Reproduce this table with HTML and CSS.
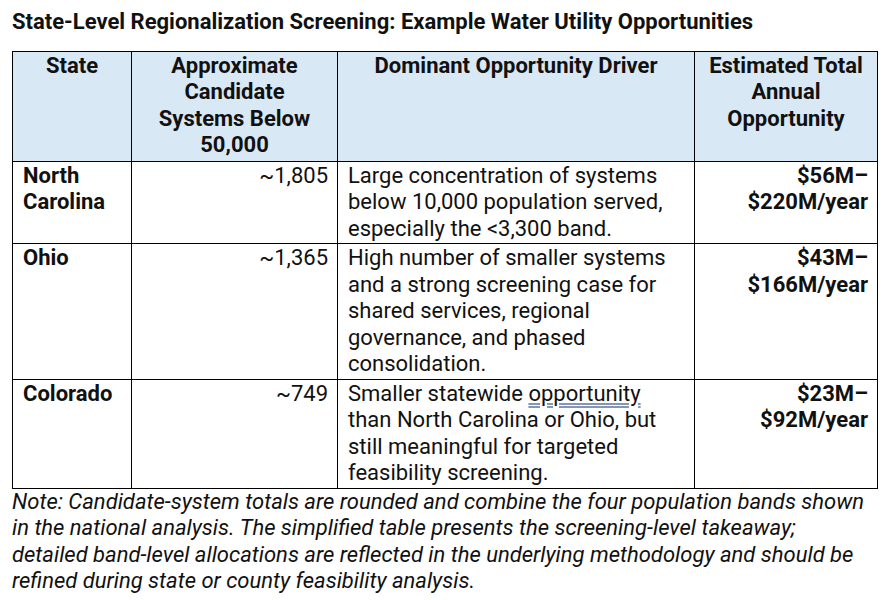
FILE: index.html
```html
<!DOCTYPE html>
<html lang="en">
<head>
<meta charset="utf-8">
<title>State-Level Regionalization Screening</title>
<link rel="stylesheet" href="styles.css">
</head>
<body>
<h1 class="title">State-Level Regionalization Screening: Example Water Utility Opportunities</h1>
<table class="grid">
  <colgroup>
    <col class="c-state">
    <col class="c-count">
    <col class="c-driver">
    <col class="c-total">
  </colgroup>
  <thead>
    <tr>
      <th>State</th>
      <th>Approximate<br>Candidate<br>Systems Below<br>50,000</th>
      <th>Dominant Opportunity Driver</th>
      <th>Estimated Total<br>Annual<br>Opportunity</th>
    </tr>
  </thead>
  <tbody>
    <tr>
      <td class="state">North Carolina</td>
      <td class="num">~1,805</td>
      <td>Large concentration of systems below 10,000 population served, especially the &lt;3,300 band.</td>
      <td class="total">$56M–<br>$220M/year</td>
    </tr>
    <tr>
      <td class="state">Ohio</td>
      <td class="num">~1,365</td>
      <td>High number of smaller systems and a strong screening case for shared services, regional governance, and phased consolidation.</td>
      <td class="total">$43M–<br>$166M/year</td>
    </tr>
    <tr>
      <td class="state">Colorado</td>
      <td class="num">~749</td>
      <td>Smaller statewide <span class="flag">opportunity</span> than North Carolina or Ohio, but still meaningful for targeted feasibility screening.</td>
      <td class="total">$23M–<br>$92M/year</td>
    </tr>
  </tbody>
</table>
<p class="note">Note: Candidate-system totals are rounded and combine the four population bands shown in the national analysis. The simplified table presents the screening-level takeaway; detailed band-level allocations are reflected in the underlying methodology and should be refined during state or county feasibility analysis.</p>
</body>
</html>
```
FILE: styles.css
```css
html, body {
  margin: 0;
  padding: 0;
  background: #ffffff;
}
body {
  font-family: Roboto, "Liberation Sans", sans-serif;
  color: #111111;
  padding: 9px 12px 0 12px;
}
.title {
  margin: 0 0 15px 0;
  font-size: 22px;
  line-height: 26.5px;
  font-weight: 700;
}
.grid {
  border-collapse: collapse;
  width: 865px;
  table-layout: fixed;
  font-size: 22px;
  line-height: 26.5px;
}
.c-state { width: 119px; }
.c-count { width: 206px; }
.c-driver { width: 357px; }
.c-total { width: 183px; }
.grid th, .grid td {
  border: 1.5px solid #000;
  padding: 1px 9px 1px 10px;
  vertical-align: top;
}
.grid th {
  background: #d9e8f5;
  font-weight: 700;
  text-align: center;
  padding: 1px 6px 2px 6px;
}
.grid td.state { font-weight: 700; }
.grid td.num { text-align: right; }
.grid td.total { text-align: right; font-weight: 700; }
.flag {
  text-decoration: underline double #8596b4;
  text-underline-offset: 2px;
}
.note {
  margin: 0;
  font-size: 22px;
  line-height: 26.5px;
  font-style: italic;
  width: 860px;
}
```
